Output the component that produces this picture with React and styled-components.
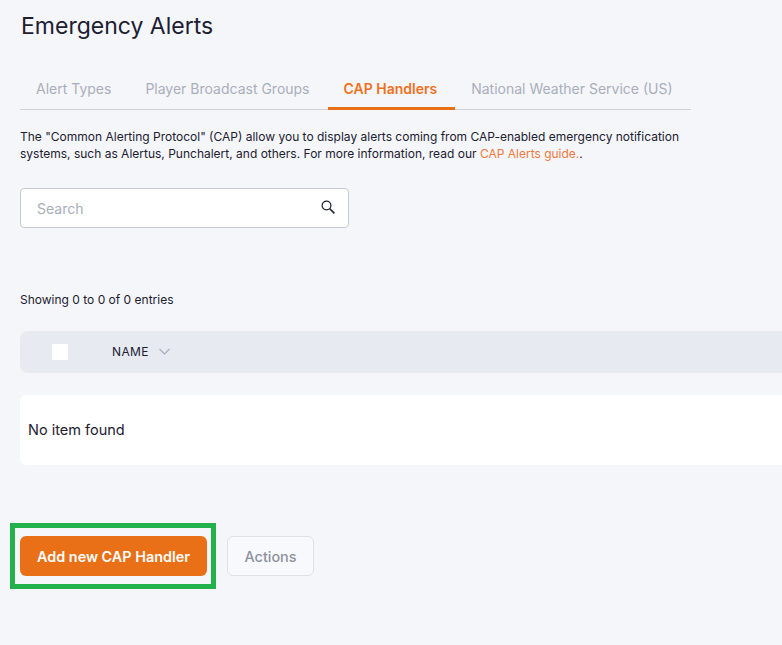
import React from "react";
import styled, { createGlobalStyle } from "styled-components";

const Global = createGlobalStyle`
  html, body { margin: 0; padding: 0; background: #f5f6fa; overflow: hidden; }
  body { font-family: Inter, "Liberation Sans", sans-serif; color: #1c2030; }
`;
const Page = styled.div`
  width: 782px; height: 645px; overflow: hidden; box-sizing: border-box;
  padding: 12px 0 0 20px; display: flex; flex-direction: column;
`;
const Title = styled.h1`
  margin: 0 0 0 1px; font-size: 23px; line-height: 29px; font-weight: 400; color: #1c2030;
`;
const Tabs = styled.div`
  margin-top: 32px; width: 671px; height: 37px; box-sizing: border-box;
  display: flex; border-bottom: 1.5px solid #cfd1d8;
`;
const Tab = styled.div`
  height: 37px; box-sizing: border-box; padding: 6px 16px 0; margin-right: ${p => p.$gap}px;
  font-size: 14px; line-height: 20px; white-space: nowrap;
  font-weight: ${p => (p.$active ? 600 : 400)};
  color: ${p => (p.$active ? "#f0711c" : "#a9aeba")};
  border-bottom: 3px solid ${p => (p.$active ? "#ea7017" : "transparent")};
  border-radius: ${p => (p.$active ? "4px 4px 0 0" : "0")};
`;
const ActiveTab = styled(Tab)`padding: 6px 18px 0 16px;`;
const Intro = styled.p`
  margin: 18px 0 0; width: 700px; font-size: 12px; line-height: 17px; color: #1c2030;
`;
const Guide = styled.a`color: #f0783a;`;
const SearchBox = styled.div`
  margin-top: 26px; width: 329px; height: 40px; box-sizing: border-box; background: #fff;
  border: 1px solid #c9cbd3; border-radius: 4px; display: flex; align-items: center;
  justify-content: space-between; padding: 0 13px 0 16px;
`;
const Placeholder = styled.span`font-size: 14px; color: #a9aeba;`;
const SearchIcon = styled.svg`margin-bottom: 3px;`;
const Showing = styled.div`margin-top: 64px; font-size: 12px; line-height: 15px; color: #1c2030;`;
const TableHead = styled.div`
  margin-top: 24px; width: 780px; height: 42px; background: #e8eaf1; border-radius: 8px 0 0 8px;
  display: flex; align-items: center; padding: 0 0 2px 32px; box-sizing: border-box;
`;
const Check = styled.div`width: 16px; height: 16px; background: #fff; margin-top: 2px;`;
const HeadLabel = styled.span`
  margin-left: 44px; font-size: 12px; letter-spacing: 0.4px; color: #1c2030;
`;
const Chevron = styled.svg`margin-left: 10px;`;
const Empty = styled.div`
  margin-top: 22px; width: 780px; height: 70px; box-sizing: border-box; background: #fff;
  border-radius: 6px 0 0 6px; display: flex; align-items: center; padding: 0 0 1px 8px;
  font-size: 14.5px; color: #1c2030;
`;
const Actions = styled.div`
  margin: 58px 0 0 -10px; display: flex; align-items: center;
`;
const Highlight = styled.div`
  border: 5px solid #22b14c; padding: 8px 4px 8px 5px; display: flex;
`;
const Primary = styled.button`
  width: 187px; height: 40px; border: 0; border-radius: 6px; padding: 0; background: #ea7017;
  color: #fff; font: 600 14.4px Inter, sans-serif;
`;
const Secondary = styled.button`
  margin-left: 11px; width: 87px; height: 40px; box-sizing: border-box; background: #f8f9fc;
  border: 1px solid #e0e2e8; border-radius: 6px; color: #8d919c; font: 500 14.4px Inter, sans-serif; padding: 0;
`;

export default function App() {
  return (
    <Page>
      <Global />
      <Title>Emergency Alerts</Title>
      <Tabs>
        <Tab $gap={2}>Alert Types</Tab>
        <Tab $gap={2}>Player Broadcast Groups</Tab>
        <ActiveTab $active $gap={0}>CAP Handlers</ActiveTab>
        <Tab $gap={0}>National Weather Service (US)</Tab>
      </Tabs>
      <Intro>
        The "Common Alerting Protocol" (CAP) allow you to display alerts coming from CAP-enabled emergency notification
        systems, such as Alertus, Punchalert, and others. For more information, read our <Guide>CAP Alerts guide.</Guide>.
      </Intro>
      <SearchBox>
        <Placeholder>Search</Placeholder>
        <SearchIcon width="14" height="14" viewBox="0 0 14 14" fill="none" stroke="#1c2030" strokeWidth="1.2">
          <circle cx="5.5" cy="5.5" r="4.4" />
          <path d="M8.8 8.8l4.6 4.6" strokeWidth="1.6" />
        </SearchIcon>
      </SearchBox>
      <Showing>Showing 0 to 0 of 0 entries</Showing>
      <TableHead>
        <Check />
        <HeadLabel>NAME</HeadLabel>
        <Chevron width="11" height="7" viewBox="0 0 11 7" fill="none" stroke="#a9aeba" strokeWidth="1.2">
          <path d="M.5 1l5 5 5-5" />
        </Chevron>
      </TableHead>
      <Empty>No item found</Empty>
      <Actions>
        <Highlight>
          <Primary>Add new CAP Handler</Primary>
        </Highlight>
        <Secondary>Actions</Secondary>
      </Actions>
    </Page>
  );
}
